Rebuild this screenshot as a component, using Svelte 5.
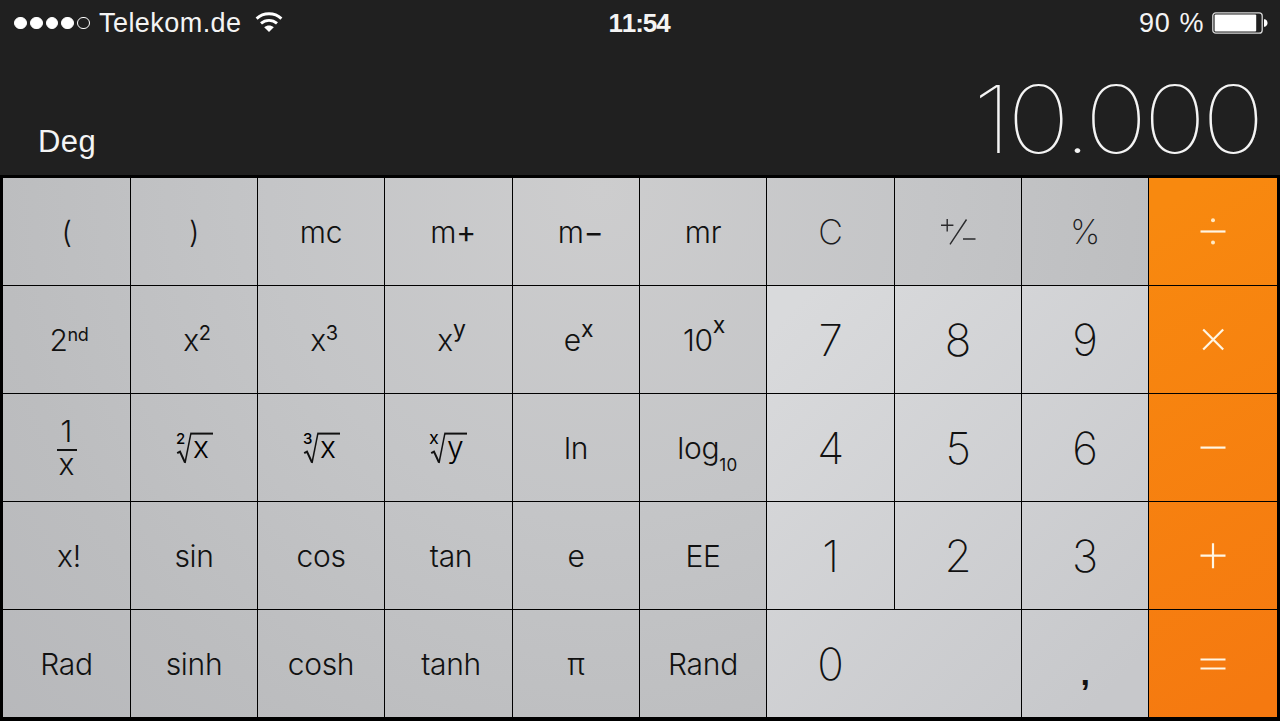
<script>
	/** @typedef {Object} Key
	 * @property {string} [label]
	 * @property {string} [bold]
	 * @property {string} [sup]
	 * @property {string} [sub]
	 * @property {string} [root]
	 * @property {string} [fraction]
	 * @property {string} [icon]
	 * @property {number} [size]
	 * @property {number} [rise]
	 * @property {number} [indent]
	 * @property {string} kind
	 */

	/** @type {Key[]} */
	const keys = [
		{ label: "(", kind: "fn" },
		{ label: ")", kind: "fn" },
		{ label: "mc", kind: "fn" },
		{ label: "m", bold: "+", indent: 9, kind: "fn" },
		{ label: "m", bold: "−", indent: 9, kind: "fn" },
		{ label: "mr", kind: "fn" },
		{ label: "C", kind: "edit" },
		{ icon: "sign", kind: "edit" },
		{ label: "%", kind: "edit" },
		{ icon: "divide", kind: "op" },

		{ label: "2", sup: "nd", size: 18, rise: 10, indent: 5, kind: "fn" },
		{ label: "x", sup: "2", size: 20, rise: 11, indent: 6, kind: "fn" },
		{ label: "x", sup: "3", size: 20, rise: 11, indent: 6, kind: "fn" },
		{ label: "x", sup: "y", size: 23, rise: 14, indent: 6, kind: "fn" },
		{ label: "e", sup: "x", size: 23, rise: 14, indent: 5, kind: "fn" },
		{ label: "10", sup: "x", size: 23, rise: 18, indent: 2, kind: "fn" },
		{ label: "7", kind: "num" },
		{ label: "8", kind: "num" },
		{ label: "9", kind: "num" },
		{ icon: "times", kind: "op" },

		{ fraction: "x", label: "1", kind: "fn" },
		{ root: "2", label: "x", kind: "fn" },
		{ root: "3", label: "x", kind: "fn" },
		{ root: "x", label: "y", kind: "fn" },
		{ label: "ln", kind: "fn" },
		{ label: "log", sub: "10", indent: 9, kind: "fn" },
		{ label: "4", kind: "num" },
		{ label: "5", kind: "num" },
		{ label: "6", kind: "num" },
		{ icon: "minus", kind: "op" },

		{ label: "x!", indent: 5, kind: "fn" },
		{ label: "sin", kind: "fn" },
		{ label: "cos", kind: "fn" },
		{ label: "tan", indent: 5, kind: "fn" },
		{ label: "e", kind: "fn" },
		{ label: "EE", kind: "fn" },
		{ label: "1", kind: "num" },
		{ label: "2", kind: "num" },
		{ label: "3", kind: "num" },
		{ icon: "plus", kind: "op" },

		{ label: "Rad", kind: "fn" },
		{ label: "sinh", kind: "fn" },
		{ label: "cosh", kind: "fn" },
		{ label: "tanh", indent: 5, kind: "fn" },
		{ label: "π", kind: "fn" },
		{ label: "Rand", kind: "fn" },
		{ label: "0", kind: "num zero" },
		{ label: ",", kind: "num comma" },
		{ icon: "equals", kind: "op" },
	];

	// Stroke paths on a 38x34 canvas, centred on the key
	const icons = {
		sign: "M2 10.2h12.4M8.2 4v12.4M11 29.3L27.5 4.5M24 24h12.5",
		divide: "M6.5 16.5h25",
		times: "M9.2 6.5l20 20M29.2 6.5L9.2 26.5",
		minus: "M6.5 16.6h25",
		plus: "M6.5 16.7h25M19 4.2v25",
		equals: "M6.5 12.5h25M6.5 21.5h25",
	};

	const bars = 5;
	const signal = 4;
</script>

<div class="screen">
	<header class="status">
		<div class="carrier">
			<div class="dots">
				{#each Array(bars) as _, i}
					<span class="dot" class:filled={i < signal}></span>
				{/each}
			</div>
			<span class="name">Telekom.de</span>
			<svg class="wifi" width="28" height="22" viewBox="0 0 28 22">
				<path
					d="M1.6 6.6C8.5 .2 19.5 .2 26.4 6.6M6 11.4C10.6 7.3 17.4 7.3 22 11.4"
					fill="none"
					stroke="#fff"
					stroke-width="2.9"
				/>
				<path d="M9.2 15.2C12 12.9 16 12.9 18.8 15.2L14 20Z" fill="#fff" />
			</svg>
		</div>
		<span class="time">11:54</span>
		<div class="power">
			<span class="percent">90 %</span>
			<svg width="56" height="22" viewBox="0 0 56 22">
				<rect x=".8" y=".8" width="49.4" height="20.4" rx="3" fill="none" stroke="#d8d8d8" stroke-width="1.3" />
				<rect x="2.6" y="2.6" width="41.6" height="16.8" rx="1" fill="#fff" />
				<path d="M52 7.2h1.2q2.4 1 2.4 3.8t-2.4 3.8H52z" fill="#fff" />
			</svg>
		</div>
	</header>

	<div class="display">
		<span class="mode">Deg</span>
		<span class="value">10.000</span>
	</div>

	<main class="keypad">
		{#each keys as key}
			<button class="key {key.kind}">
				{#if key.icon}
					<svg width="38" height="34" viewBox="0 0 38 34">
						<path class="glyph" d={icons[key.icon]} />
						{#if key.icon === "divide"}
							<circle cx="19" cy="5.2" r="2" />
							<circle cx="19" cy="27.6" r="2" />
						{/if}
					</svg>
				{:else if key.root}
					<svg width="39" height="50" viewBox="0 -8 39 50">
						<text class="index" class:wide={key.root === "x"} x={key.root === "x" ? 0 : 1} y="13">{key.root}</text>
						<path class="tick" d="M2.2 22.2L5 20.6L10 31.5" />
						<path class="radical" d="M10 32L15.8 2.8" />
						<path class="tick" d="M15.2 2.6H38" />
						<text class="radicand" x="18" y="26.5">{key.label}</text>
					</svg>
				{:else if key.fraction}
					<span class="fraction">
						<span class="top">{key.label}</span>
						<span class="bottom">{key.fraction}</span>
					</span>
				{:else}
					<span class="label" style="padding-left: {key.indent ?? 0}px"
						>{key.label}{#if key.bold}<span class="bold">{key.bold}</span>{/if}{#if key.sup}<span
								class="sup"
								style="font-size: {key.size}px; vertical-align: {key.rise}px">{key.sup}</span
							>{/if}{#if key.sub}<span class="sub">{key.sub}</span>{/if}</span
					>
				{/if}
			</button>
		{/each}
	</main>
</div>

<style>
	:global(body) {
		background: #000;
	}

	.screen {
		display: flex;
		flex-direction: column;
		width: 1280px;
		height: 721px;
		overflow: hidden;
		background: #000;
		color: #f4f4f4;
		font-family: "Liberation Sans", Arial, sans-serif;
	}

	.status {
		display: grid;
		grid-template-columns: 1fr auto 1fr;
		align-items: center;
		height: 46px;
		padding: 0 12px 0 14px;
		background: #202020;
		font-size: 27px;
	}

	.carrier,
	.power,
	.dots {
		display: flex;
		align-items: center;
	}

	.dots {
		gap: 3px;
		margin-right: 9px;
	}

	.dot {
		box-sizing: border-box;
		width: 12.8px;
		height: 12.8px;
		border: 1.3px solid #fff;
		border-radius: 50%;
	}

	.dot.filled {
		background: #fff;
	}

	.name {
		letter-spacing: 0.45px;
	}

	.wifi {
		margin-left: 13px;
	}

	.time {
		margin-right: 4px;
		font-size: 26px;
		font-weight: 700;
		font-kerning: none;
		letter-spacing: -1.1px;
	}

	.power {
		justify-content: flex-end;
		gap: 8px;
	}

	.percent {
		letter-spacing: 0.6px;
		word-spacing: 1px;
	}

	.display {
		display: flex;
		justify-content: space-between;
		align-items: flex-end;
		height: 129px;
		box-sizing: border-box;
		padding: 0 20px 0 38px;
		background: #202020;
	}

	.mode {
		margin-bottom: 15px;
		font-size: 31px;
		line-height: 36px;
		letter-spacing: 0.4px;
	}

	.value {
		font-family: Inter, sans-serif;
		font-size: 93px;
		font-weight: 100;
		line-height: 112px;
		letter-spacing: -4px;
		transform: scaleX(1.15);
		transform-origin: right;
	}

	.keypad {
		display: grid;
		grid-template-columns: 127px 126px 126px 127px 126px 126px 127px 126px 126px 128px;
		grid-template-rows: repeat(5, 107px);
		gap: 1px;
		margin: 3px 3px 4px;
	}

	/* Backgrounds are fixed so that the light falls across the whole pad */
	.key {
		display: flex;
		justify-content: center;
		align-items: center;
		min-width: 0;
		padding: 0;
		border: none;
		color: #111;
		font-family: Inter, sans-serif;
		font-size: 30px;
		font-weight: 300;
		background: radial-gradient(circle at 600px 190px, #cdcdce 0, #c4c5c7 330px, #bcbdbf 600px, #b7b8bb 820px) fixed;
	}

	.key.edit {
		color: #1c1c1e;
		font-size: 34px;
		font-weight: 250;
	}

	.key.num {
		font-size: 44px;
		font-weight: 200;
		background: linear-gradient(135deg, #d9dadc 55%, #c7c8cb 90%) fixed;
	}

	.key.op {
		background: linear-gradient(150deg, #f8890f 60%, #f57910 98%) fixed;
	}

	.key.zero {
		grid-column: span 2;
		padding-right: 127px;
	}

	.key.comma {
		padding-top: 20px;
		font-family: "Liberation Sans", Arial, sans-serif;
		font-size: 34px;
		font-weight: 700;
	}

	.label {
		white-space: nowrap;
		letter-spacing: -0.3px;
	}

	.bold {
		font-weight: 400;
	}

	.sup,
	.sub {
		line-height: 0;
		font-weight: 400;
	}

	.sub {
		font-size: 17px;
		letter-spacing: 0.4px;
		vertical-align: -12px;
	}

	.fraction {
		display: flex;
		flex-direction: column;
		align-items: center;
		width: 20px;
	}

	.fraction span {
		width: 100%;
		line-height: 27px;
	}

	.top {
		padding-bottom: 4px;
		border-bottom: 2px solid #111;
	}

	.glyph {
		fill: none;
		stroke: #2a2a2c;
		stroke-width: 1.4;
	}

	.op .glyph {
		stroke: #fff6e4;
		stroke-width: 2.2;
	}

	.op circle {
		fill: #ffe9c4;
	}

	.tick,
	.radical {
		fill: none;
		stroke: #111;
		stroke-width: 2;
	}

	.radical {
		stroke-width: 1.5;
	}

	.index {
		font-size: 15px;
		font-weight: 500;
	}

	.index.wide {
		font-size: 18px;
		font-weight: 400;
	}

	.radicand {
		font-size: 30px;
	}
</style>
